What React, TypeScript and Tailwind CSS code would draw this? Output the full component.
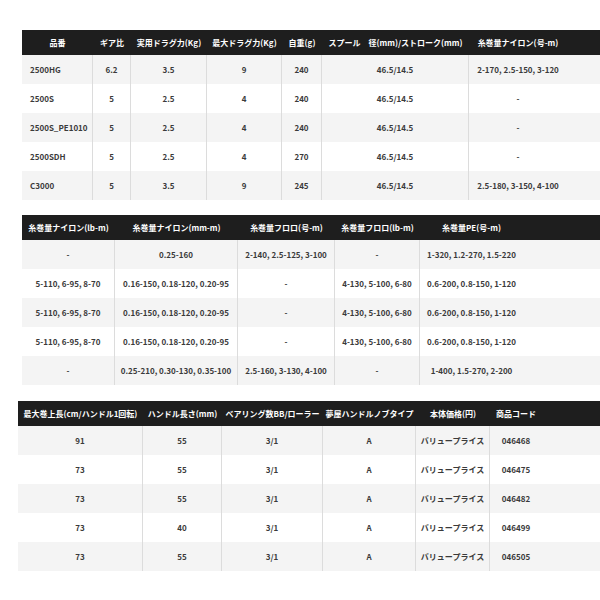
import React from "react";

type Col = { w: number; align?: "left" | "center" };

function Table({
  cols,
  head,
  rows,
  extra,
}: {
  cols: Col[];
  head: string[];
  rows: string[][];
  extra?: number;
}) {
  return (
    <div className="flex flex-col">
      <div className="flex h-[25px] bg-[#1e1e1e] text-white font-bold text-[8px] leading-none">
        {head.map((h, i) => (
          <div
            key={i}
            style={{ width: cols[i].w }}
            className="flex items-center justify-center shrink-0 whitespace-nowrap"
          >
            {h}
          </div>
        ))}
        {extra ? <div style={{ width: extra }} className="shrink-0" /> : null}
      </div>
      {rows.map((r, ri) => (
        <div
          key={ri}
          className={`flex h-[29px] text-[8px] leading-none font-bold text-[#3a3a3a] ${
            ri % 2 === 0 ? "bg-[#f4f4f4]" : "bg-white"
          }`}
        >
          {r.map((c, ci) => (
            <div
              key={ci}
              style={{ width: cols[ci].w }}
              className={`flex items-center shrink-0 whitespace-nowrap ${
                ci < r.length - 1 ? "border-r border-[#dcdcdc]" : ""
              } ${cols[ci].align === "left" ? "justify-start pl-[8px]" : "justify-center"}`}
            >
              {c}
            </div>
          ))}
        </div>
      ))}
    </div>
  );
}

export default function App() {
  const t1cols: Col[] = [
    { w: 71, align: "left" },
    { w: 38 },
    { w: 76 },
    { w: 75 },
    { w: 40 },
    { w: 147 },
    { w: 98 },
  ];
  const t2cols: Col[] = [{ w: 93 }, { w: 123 }, { w: 97 }, { w: 85 }, { w: 103 }];
  const t3cols: Col[] = [{ w: 125 }, { w: 79 }, { w: 101 }, { w: 93 }, { w: 74 }, { w: 52 }];

  return (
    <div
      className="w-[600px] h-[600px] bg-white pt-[30px] flex flex-col"
      style={{ fontFamily: '"Noto Sans CJK JP", "Noto Sans", sans-serif' }}
    >
      <div className="ml-[22px]">
        <Table
          cols={t1cols}
          extra={15}
          head={[
            "品番",
            "ギア比",
            "実用ドラグ力(Kg)",
            "最大ドラグ力(Kg)",
            "自重(g)",
            "スプール　径(mm)/ストローク(mm)",
            "糸巻量ナイロン(号-m)",
          ]}
          rows={[
            ["2500HG", "6.2", "3.5", "9", "240", "46.5/14.5", "2-170, 2.5-150, 3-120"],
            ["2500S", "5", "2.5", "4", "240", "46.5/14.5", "-"],
            ["2500S_PE1010", "5", "2.5", "4", "240", "46.5/14.5", "-"],
            ["2500SDH", "5", "2.5", "4", "270", "46.5/14.5", "-"],
            ["C3000", "5", "3.5", "9", "245", "46.5/14.5", "2.5-180, 3-150, 4-100"],
          ]}
        />
      </div>
      <div className="ml-[22px] mt-[15px]">
        <Table
          cols={t2cols}
          head={[
            "糸巻量ナイロン(lb-m)",
            "糸巻量ナイロン(mm-m)",
            "糸巻量フロロ(号-m)",
            "糸巻量フロロ(lb-m)",
            "糸巻量PE(号-m)",
          ]}
          rows={[
            ["-", "0.25-160", "2-140, 2.5-125, 3-100", "-", "1-320, 1.2-270, 1.5-220"],
            ["5-110, 6-95, 8-70", "0.16-150, 0.18-120, 0.20-95", "-", "4-130, 5-100, 6-80", "0.6-200, 0.8-150, 1-120"],
            ["5-110, 6-95, 8-70", "0.16-150, 0.18-120, 0.20-95", "-", "4-130, 5-100, 6-80", "0.6-200, 0.8-150, 1-120"],
            ["5-110, 6-95, 8-70", "0.16-150, 0.18-120, 0.20-95", "-", "4-130, 5-100, 6-80", "0.6-200, 0.8-150, 1-120"],
            ["-", "0.25-210, 0.30-130, 0.35-100", "2.5-160, 3-130, 4-100", "-", "1-400, 1.5-270, 2-200"],
          ]}
        />
      </div>
      <div className="ml-[18px] mt-[16px]">
        <Table
          cols={t3cols}
          head={[
            "最大巻上長(cm/ハンドル1回転)",
            "ハンドル長さ(mm)",
            "ベアリング数BB/ローラー",
            "夢屋ハンドルノブタイプ",
            "本体価格(円)",
            "商品コード",
          ]}
          rows={[
            ["91", "55", "3/1", "A", "バリュープライス", "046468"],
            ["73", "55", "3/1", "A", "バリュープライス", "046475"],
            ["73", "55", "3/1", "A", "バリュープライス", "046482"],
            ["73", "40", "3/1", "A", "バリュープライス", "046499"],
            ["73", "55", "3/1", "A", "バリュープライス", "046505"],
          ]}
        />
      </div>
    </div>
  );
}
